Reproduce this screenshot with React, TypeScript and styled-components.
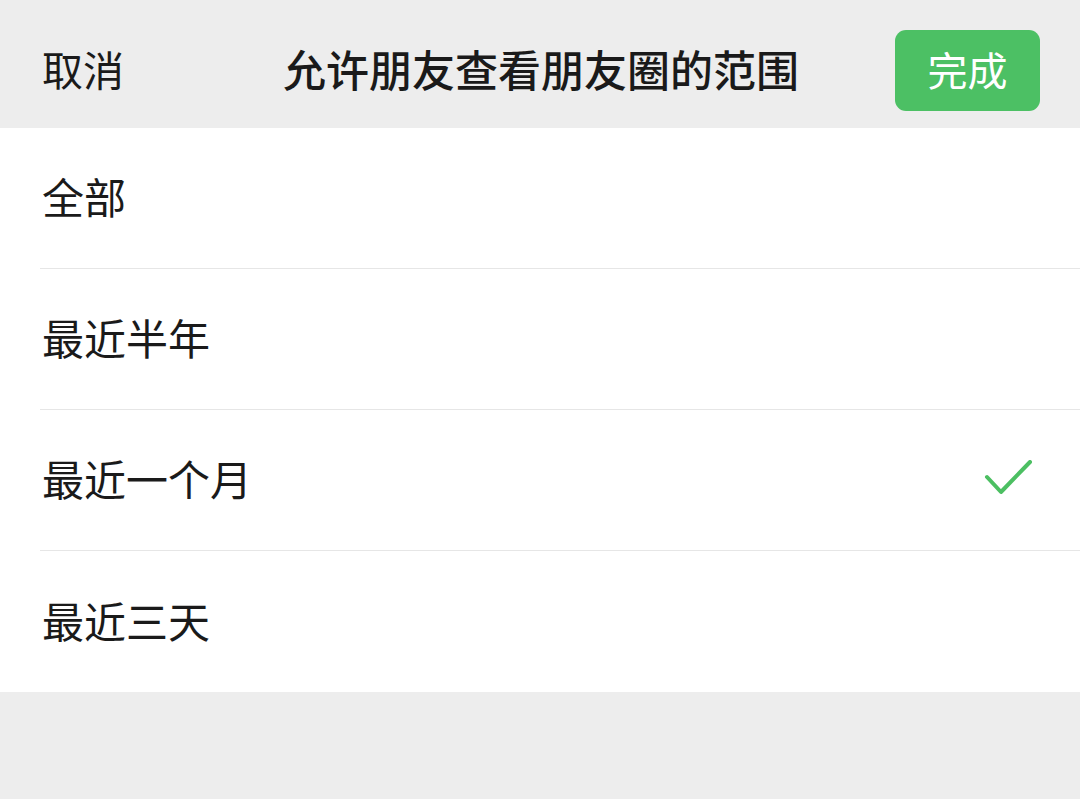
import React from "react";
import styled, { createGlobalStyle } from "styled-components";

const GlobalStyle = createGlobalStyle`
  html, body {
    margin: 0;
    padding: 0;
    background: #ededed;
  }
  body {
    font-family: "Noto Sans CJK SC", "Noto Sans", sans-serif;
    color: #1a1a1a;
  }
`;

const Page = styled.div`
  width: 1080px;
  height: 799px;
  background: #ededed;
`;

const Header = styled.div`
  display: grid;
  grid-template-columns: 1fr auto 1fr;
  align-items: center;
  height: 128px;
  padding: 0 40px 0 42px;
  box-sizing: border-box;
`;

const Cancel = styled.div`
  font-size: 41px;
  line-height: 1;
  justify-self: start;
  margin-top: 8px;
`;

const Title = styled.div`
  font-size: 43px;
  font-weight: 500;
  line-height: 1;
  margin-top: 8px;
`;

const DoneButton = styled.button`
  justify-self: end;
  width: 145px;
  height: 81px;
  margin-top: 13px;
  border: none;
  border-radius: 11px;
  background: #4cc064;
  color: #fff;
  font-family: inherit;
  font-size: 40px;
  font-weight: 400;
  line-height: 1;
  padding: 0 0 4px;
`;

const List = styled.div`
  background: #fff;
`;

const Row = styled.div<{ $last?: boolean }>`
  display: flex;
  align-items: center;
  justify-content: space-between;
  height: 141px;
  margin-left: 40px;
  padding: 0 48px 0 2px;
  box-sizing: border-box;
  border-bottom: ${(p) => (p.$last ? "none" : "1px solid #e6e6e6")};
  font-size: 42px;
  line-height: 1;
`;

const Label = styled.span`
  margin-top: -4px;
`;

const Check = () => (
  <svg width="50" height="40" viewBox="0 0 50 40" style={{ marginRight: -2 }}>
    <path
      d="M3 17 L17 32 L46 2"
      fill="none"
      stroke="#4cbf62"
      strokeWidth="4"
      strokeLinecap="round"
      strokeLinejoin="round"
    />
  </svg>
);

const options = ["全部", "最近半年", "最近一个月", "最近三天"];
const selected = 2;

const App = () => (
  <Page>
    <GlobalStyle />
    <Header>
      <Cancel>取消</Cancel>
      <Title>允许朋友查看朋友圈的范围</Title>
      <DoneButton>完成</DoneButton>
    </Header>
    <List>
      {options.map((label, i) => (
        <Row key={label} $last={i === options.length - 1}>
          <Label>{label}</Label>
          {i === selected && <Check />}
        </Row>
      ))}
    </List>
  </Page>
);

export default App;
